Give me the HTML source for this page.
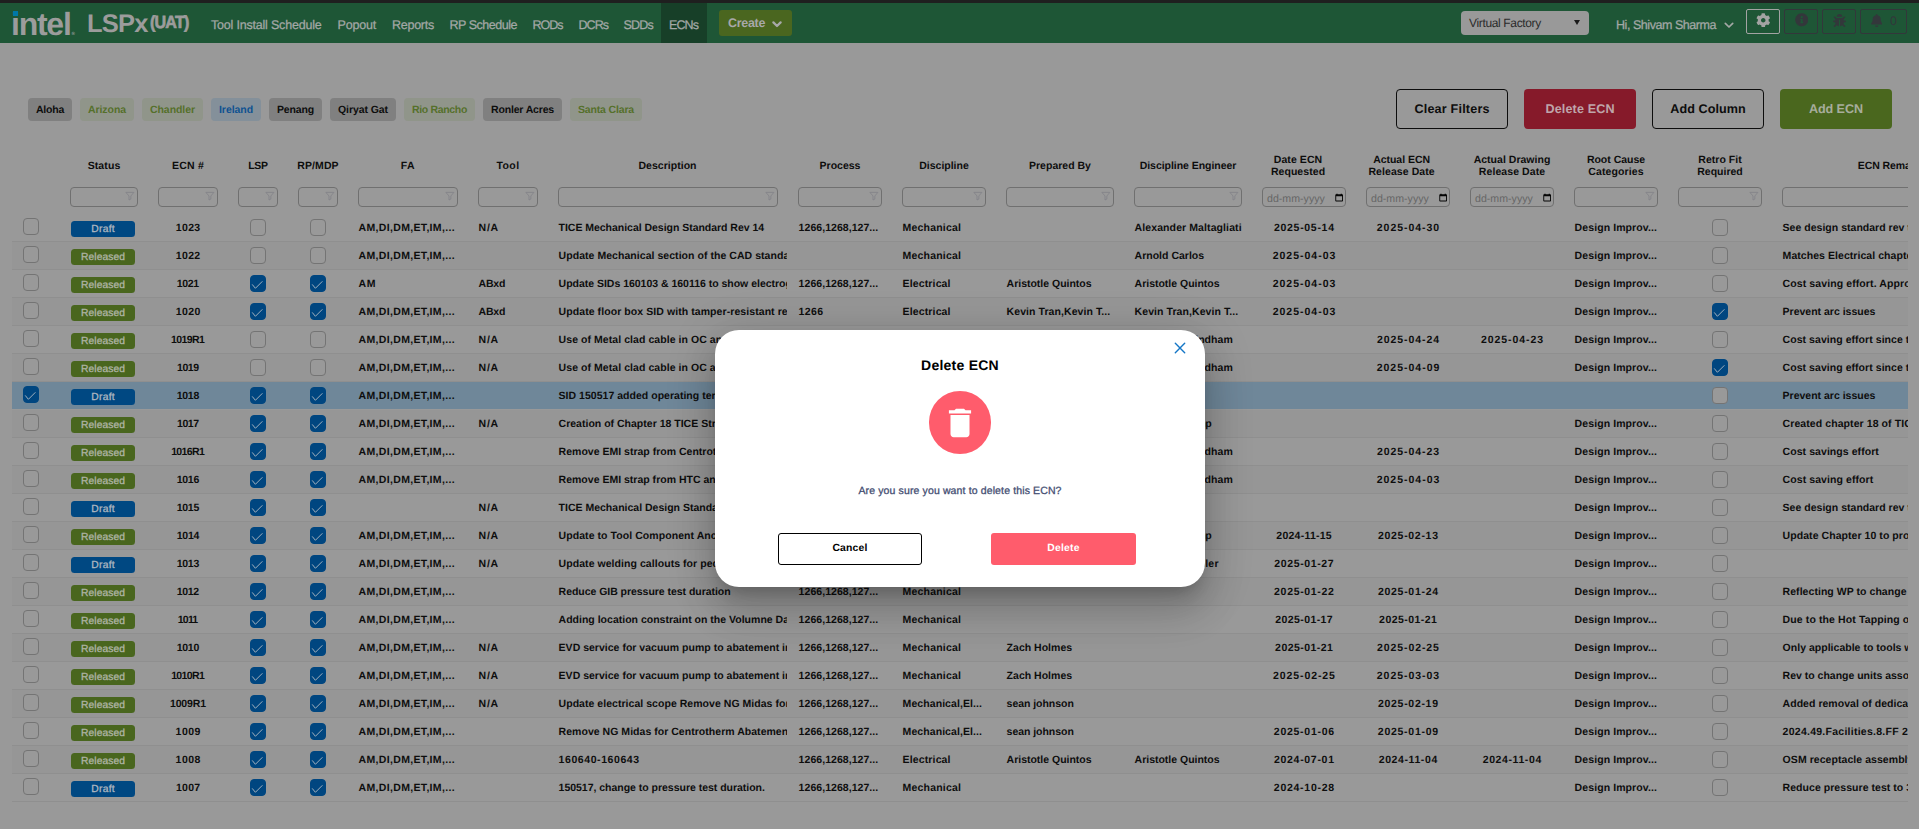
<!DOCTYPE html>
<html lang="en">
<head>
<meta charset="utf-8">
<title>LSPx (UAT) - ECNs</title>
<style>
*{box-sizing:border-box;margin:0;padding:0}
html,body{width:1919px;height:829px;overflow:hidden}
body{position:relative;background:#999;font-family:"Liberation Sans",sans-serif;color:#000;text-rendering:geometricPrecision}
.topstrip{position:absolute;left:0;top:0;width:1919px;height:3px;background:#1f1f1f}
.hdr{position:absolute;left:0;top:3px;width:1919px;height:40px;background:#1e5636}
.hdr>*{position:absolute}
.logo{left:13px;top:6px;height:28px;width:64px}
.logo .dot{position:absolute;left:0;top:2px;width:5px;height:5px;background:#0078a7;z-index:2}
.logo .intel{position:absolute;left:-2px;top:-3.5px;font-size:32px;line-height:36px;letter-spacing:-1.25px;color:#9c9c9c;font-weight:700}
.logo .reg{position:absolute;left:58.6px;top:20.6px;font-size:4.6px;line-height:8px;font-weight:700;color:#9c9c9c}
.brand{left:87px;top:6px;font-size:25.5px;line-height:30px;color:#9c9c9c;letter-spacing:-0.75px;font-weight:700}
.uat{left:149.5px;top:8.5px;font-size:17.5px;line-height:20px;font-weight:700;color:#9c9c9c;letter-spacing:-0.9px;transform:scaleX(0.92);transform-origin:0 0;-webkit-text-stroke:0.7px #9c9c9c}
nav{left:0;top:0;height:40px;width:720px}
.navactive{position:absolute;left:661px;top:0;width:46px;height:40px;background:#173f28}
.nav{position:absolute;top:14px;font-size:12.5px;line-height:16px;color:#a4a8a6;white-space:nowrap;-webkit-text-stroke:0.25px #a4a8a6}
.create{left:719px;top:7px;width:73px;height:26px;border-radius:3px;background:#4a661f;color:#a8a8a8;font-size:12.5px;font-weight:700;line-height:26px}
.create span{position:absolute;left:9px;top:0;letter-spacing:-0.3px}
.create svg{position:absolute;left:52.5px;top:10.5px}
.vf{left:1461px;top:8px;width:128px;height:24px;border-radius:4px;background:#999;font-size:12px;line-height:24px;color:#2b2b2b}
.vf span{position:absolute;left:8px;top:0;letter-spacing:-0.35px}
.vf i{position:absolute;left:113px;top:9px;width:0;height:0;border-left:3.5px solid transparent;border-right:3.5px solid transparent;border-top:5px solid #1a1a1a}
.user{left:1616px;top:14px;font-size:12.5px;line-height:16px;color:#a5b3ab;white-space:nowrap;width:130px;height:16px}
.user span{position:absolute;left:0;top:0;letter-spacing:-0.45px;-webkit-text-stroke:0.25px #a4a8a6;color:#a4a8a6}
.user svg{position:absolute;left:108px;top:5.2px}
.ib{top:6px;height:25px;border:1px solid #33373b;border-radius:2px}
.ib svg{position:absolute}
.ib1{left:1746px;width:34px;border-color:#a3a3a3}
.ib1 svg{left:8.8px;top:2.8px}
.ib2{left:1784px;width:34px}
.ib2 svg{left:9.8px;top:3.3px}
.ib3{left:1822px;width:34px}
.ib3 svg{left:10.1px;top:3.6px}
.ib4{left:1860px;width:47px}
.ib4 svg{left:10px;top:3.6px}
.ib4 span{position:absolute;left:29px;top:3px;font-size:12.5px;line-height:16px;color:#33373b}

.chip{position:absolute;top:98px;height:23px;border-radius:4px;font-size:10.5px;font-weight:700;line-height:25.4px;text-align:left;padding-left:8px;white-space:nowrap;overflow:hidden}
.kg{background:#808080;color:#0d0d0d}
.ko{background:#90958a;color:#55702a}

.kb{background:#84909a;color:#0f5291}

.abtn{position:absolute;top:89px;width:112px;height:40px;border-radius:4px;font-size:12.6px;font-weight:700;line-height:38.6px;text-align:center;white-space:nowrap}
.bo{border:1px solid #0d0d0d;color:#0d0d0d;background:#999}
.br{background:#861a2a;color:#bfa5aa;line-height:40.6px}
.bg{background:#4a671e;color:#a7ad9c;line-height:40.6px}

.grid{position:absolute;left:12px;top:146px;width:1896px;height:660px;overflow:hidden;font-size:10.5px;font-weight:700;color:#0d0d0d}
.thead{position:absolute;left:0;top:0;width:1896px;height:40px}
.th{position:absolute;top:0;height:40px;line-height:40px;text-align:center;white-space:nowrap}
.th span{display:block}
.th.two{line-height:12px;padding-top:8.4px}
.frow{position:absolute;left:0;top:41px;width:1896px;height:20px}
.fi{position:absolute;top:0;height:20px;border:1px solid #707070;border-radius:4px;background:#999}
.fi .fn{position:absolute;right:2.5px;top:3px}
.fi.date span{position:absolute;left:4px;top:1.5px;line-height:19px;font-size:10.6px;font-weight:400;color:#666;letter-spacing:0.02px}
.fi.date .cal{position:absolute;right:2px;top:5px}
.tr{position:absolute;left:0;width:1896px;height:28px;border-bottom:1px solid #8f8f8f}
.tr.alt{background:#969696}
.tr.sel{background:#6f8799;border-bottom-color:#999;background-clip:padding-box}
.td{position:absolute;top:0;height:27px;line-height:28.7px;white-space:nowrap;overflow:hidden;padding:0 10px}
.td.l{padding-left:10.6px;padding-right:0}
.td.c{text-align:center}
.td.l{text-align:left}
.cb{display:inline-block;width:16px;height:16.5px;border:1px solid #747474;border-radius:4px;background:#999;vertical-align:top;margin-top:5.2px;position:relative}
.cb.rowcb{margin-top:4.2px}
.cb.on{background:#004680;border-color:#004680;height:17px;margin-top:5px}
.cb.on.rowcb{margin-top:4px}
.cb.on svg{position:absolute;left:-1px;top:-1px}
.cb.dim{background:#999}
.bdg{display:inline-block;width:64px;height:16px;border-radius:3.5px;font-size:10.3px;font-weight:400;line-height:17.8px;text-align:center;vertical-align:top;margin-top:7px;margin-left:-2px;overflow:hidden}
.bdg.dr{background:#004882;color:#aeb7c0;-webkit-text-stroke:0.3px #aeb7c0}
.bdg.rl{background:#49661e;color:#b0b5a6;-webkit-text-stroke:0.3px #b0b5a6}

.modal{position:absolute;left:715px;top:330px;width:490px;height:257px;border-radius:24px;background:#fff;box-shadow:0 11px 15px -7px rgba(0,0,0,0.2),0 24px 38px 3px rgba(0,0,0,0.14),0 9px 46px 8px rgba(0,0,0,0.12)}
.modal>*{position:absolute}
.close{left:458.8px;top:11.6px}
.mtitle{left:0;top:25px;width:490px;text-align:center;font-size:14px;font-weight:700;line-height:20px;letter-spacing:0.25px;color:#000}
.circ{left:213.8px;top:61px;width:62.4px;height:62.6px;border-radius:50%;background:#ff5c6c}
.circ svg{position:absolute;left:12.2px;top:12.9px}
.mmsg{left:0;top:152.6px;width:490px;text-align:center;font-size:10.5px;line-height:16px;letter-spacing:0.13px;color:#444e72;-webkit-text-stroke:0.3px #444e72}
.mbtn{top:203px;height:32px;border-radius:3px;font-size:10.4px;font-weight:700;line-height:30px;text-align:center;letter-spacing:0.18px}
.cancel{left:63px;width:144px;border:1px solid #000;color:#000;background:#fff}
.delete{left:276px;width:145px;background:#ff5c6c;color:#fff;line-height:32px}
</style>
</head>
<body>
<div class="topstrip"></div>
<header class="hdr">
<div class="logo"><span class="dot"></span><span class="intel">intel</span><span class="reg">&reg;</span></div>
<div class="brand">LSPx</div><div class="uat">(UAT)</div>
<nav>
<div class="navactive"></div>
<a class="nav" style="left:211.0px;letter-spacing:-0.198px">Tool Install Schedule</a>
<a class="nav" style="left:337.5px;letter-spacing:-0.186px">Popout</a>
<a class="nav" style="left:392.0px;letter-spacing:-0.253px">Reports</a>
<a class="nav" style="left:449.5px;letter-spacing:-0.476px">RP Schedule</a>
<a class="nav" style="left:532.5px;letter-spacing:-1.007px">RODs</a>
<a class="nav" style="left:578.5px;letter-spacing:-0.958px">DCRs</a>
<a class="nav" style="left:623.5px;letter-spacing:-0.785px">SDDs</a>
<a class="nav" style="left:669.0px;letter-spacing:-0.910px">ECNs</a>
</nav>
<div class="create"><span>Create</span><svg width="10" height="7" viewBox="0 0 10 7"><path d="M1.4 1.4 5 5 8.600 1.400" fill="none" stroke="#a8a8a8" stroke-width="2.2" stroke-linecap="round" stroke-linejoin="round"/></svg></div>
<div class="vf"><span>Virtual Factory</span><i></i></div>
<div class="user"><span>Hi, Shivam Sharma</span><svg width="10" height="7" viewBox="0 0 10 7"><path d="M1.300 1.300 5 5 8.700 1.300" fill="none" stroke="#a4a8a6" stroke-width="1.700" stroke-linecap="round" stroke-linejoin="round"/></svg></div>
<div class="ib ib1"><svg width="14.5" height="14.5" viewBox="0 0 512 512"><path fill="#a3a3a3" d="M487.4 315.7l-42.600-24.600c4.300-23.200 4.300-47 0-70.200l42.600-24.600c4.900-2.800 7.100-8.600 5.500-14-11.100-35.600-30-67.800-54.700-94.600-3.800-4.100-10-5.100-14.800-2.300L380.800 110c-17.900-15.400-38.500-27.300-60.800-35.100V25.800c0-5.600-3.900-10.500-9.400-11.700-36.700-8.200-74.300-7.800-109.200 0-5.500 1.200-9.400 6.100-9.400 11.700V75c-22.200 7.900-42.800 19.800-60.800 35.100L88.700 85.500c-4.900-2.800-11-1.900-14.800 2.300-24.700 26.700-43.600 58.900-54.700 94.600-1.700 5.400.6 11.200 5.500 14L67.300 221c-4.300 23.200-4.300 47 0 70.200l-42.600 24.600c-4.900 2.800-7.100 8.600-5.500 14 11.100 35.600 30 67.800 54.700 94.600 3.800 4.100 10 5.100 14.800 2.300l42.600-24.600c17.900 15.400 38.500 27.300 60.800 35.100v49.200c0 5.600 3.900 10.500 9.400 11.700 36.700 8.200 74.300 7.800 109.200 0 5.500-1.200 9.400-6.100 9.400-11.700v-49.200c22.200-7.900 42.800-19.800 60.800-35.100l42.600 24.600c4.900 2.800 11 1.900 14.800-2.300 24.700-26.700 43.600-58.900 54.700-94.600 1.500-5.500-.7-11.300-5.600-14.100zM256 336c-44.100 0-80-35.900-80-80s35.900-80 80-80 80 35.900 80 80-35.900 80-80 80z"/></svg></div>
<div class="ib ib2 dk"><svg width="13.5" height="13.5" viewBox="0 0 512 512"><path fill="#33373b" d="M256 8C119.043 8 8 119.083 8 256c0 136.997 111.043 248 248 248s248-111.003 248-248C504 119.083 392.957 8 256 8zm0 110c23.196 0 42 18.804 42 42s-18.804 42-42 42-42-18.804-42-42 18.804-42 42-42zm56 254c0 6.627-5.373 12-12 12h-88c-6.627 0-12-5.373-12-12v-24c0-6.627 5.373-12 12-12h12v-64h-12c-6.627 0-12-5.373-12-12v-24c0-6.627 5.373-12 12-12h64c6.627 0 12 5.373 12 12v100h12c6.627 0 12 5.373 12 12v24z"/></svg></div>
<div class="ib ib3 dk"><svg width="13" height="13" viewBox="0 0 512 512"><path fill="#33373b" d="M511.988 288.900c-.478 17.430-15.217 31.100-32.653 31.100H424v16c0 21.864-4.882 42.584-13.600 61.145l60.228 60.228c12.496 12.497 12.496 32.758 0 45.255-12.498 12.497-32.759 12.496-45.256 0l-54.736-54.736C345.886 467.965 314.351 480 280 480V236c0-6.627-5.373-12-12-12h-24c-6.627 0-12 5.373-12 12v244c-34.351 0-65.886-12.035-90.636-32.108l-54.736 54.736c-12.498 12.497-32.759 12.496-45.256 0-12.496-12.497-12.496-32.758 0-45.255l60.228-60.228C92.882 378.584 88 357.864 88 336v-16H32.666C15.230 320 .491 306.330.013 288.900-.484 270.816 14.028 256 32 256h56v-58.745l-46.628-46.628c-12.496-12.497-12.496-32.758 0-45.255 12.498-12.497 32.758-12.497 45.256 0L141.255 160h229.489l54.627-54.627c12.498-12.497 32.758-12.497 45.256 0 12.496 12.497 12.496 32.758 0 45.255L424 197.255V256h56c17.972 0 32.484 14.816 31.988 32.900zM257 0c-61.856 0-112 50.144-112 112h224C369 50.144 318.856 0 257 0z"/></svg></div>
<div class="ib ib4 dk"><svg width="11.4" height="13" viewBox="0 0 448 512"><path fill="#33373b" d="M224 512c35.320 0 63.970-28.650 63.970-64H160.030c0 35.350 28.650 64 63.970 64zm215.390-149.710c-19.320-20.760-55.470-51.990-55.470-154.290 0-77.700-54.480-139.900-127.940-155.160V32c0-17.670-14.320-32-31.980-32s-31.980 14.330-31.980 32v20.840C118.560 68.100 64.080 130.300 64.080 208c0 102.300-36.150 133.530-55.470 154.290-6 6.450-8.660 14.160-8.610 21.710.11 16.400 12.980 32 32.100 32h383.800c19.120 0 32-15.600 32.100-32 .05-7.550-2.610-15.270-8.610-21.710z"/></svg><span>0</span></div>
</header>
<div class="chip kg" style="left:28px;width:44px;letter-spacing:-0.233px">Aloha</div>
<div class="chip ko" style="left:80px;width:54px;letter-spacing:-0.072px">Arizona</div>
<div class="chip ko" style="left:142px;width:61px;letter-spacing:-0.063px">Chandler</div>
<div class="chip kb" style="left:211px;width:50px;letter-spacing:-0.061px">Ireland</div>
<div class="chip kg" style="left:269px;width:53px;letter-spacing:-0.154px">Penang</div>
<div class="chip kg" style="left:330px;width:66px;letter-spacing:-0.077px">Qiryat Gat</div>
<div class="chip ko" style="left:404px;width:71px;letter-spacing:-0.333px">Rio Rancho</div>
<div class="chip kg" style="left:483px;width:79px;letter-spacing:-0.164px">Ronler Acres</div>
<div class="chip ko" style="left:570px;width:72px;letter-spacing:-0.161px">Santa Clara</div>
<div class="abtn bo" style="left:1396px;letter-spacing:0.197px;text-indent:0.197px">Clear Filters</div>
<div class="abtn br" style="left:1524px;letter-spacing:0.142px;text-indent:0.142px">Delete ECN</div>
<div class="abtn bo" style="left:1652px;letter-spacing:0.079px;text-indent:0.079px">Add Column</div>
<div class="abtn bg" style="left:1780px;letter-spacing:-0.066px;text-indent:-0.066px">Add ECN</div>
<div class="grid">
<div class="thead">
<div class="th" style="left:48.0px;width:88px"><span style="letter-spacing:0.102px;text-indent:0">Status</span></div>
<div class="th" style="left:136.0px;width:80px"><span style="letter-spacing:0.233px;text-indent:0">ECN #</span></div>
<div class="th" style="left:216.0px;width:60px"><span style="letter-spacing:-0.346px;text-indent:0">LSP</span></div>
<div class="th" style="left:276.0px;width:60px"><span style="letter-spacing:0.088px;text-indent:0">RP/MDP</span></div>
<div class="th" style="left:336.0px;width:120px"><span style="letter-spacing:0.420px;text-indent:0">FA</span></div>
<div class="th" style="left:456.0px;width:80px"><span style="letter-spacing:0.419px;text-indent:0">Tool</span></div>
<div class="th" style="left:536.0px;width:239px"><span style="letter-spacing:0.034px;text-indent:0">Description</span></div>
<div class="th" style="left:776.0px;width:104px"><span style="letter-spacing:-0.002px;text-indent:0">Process</span></div>
<div class="th" style="left:880.0px;width:104px"><span style="letter-spacing:-0.008px;text-indent:0">Discipline</span></div>
<div class="th" style="left:984.0px;width:128px"><span style="letter-spacing:0.007px;text-indent:0">Prepared By</span></div>
<div class="th" style="left:1112.0px;width:128px"><span style="letter-spacing:-0.045px;text-indent:0">Discipline Engineer</span></div>
<div class="th two" style="left:1234.0px;width:104px"><span style="letter-spacing:0.084px;text-indent:0">Date ECN</span><span style="letter-spacing:0.062px;text-indent:0">Requested</span></div>
<div class="th two" style="left:1337.6px;width:104px"><span style="letter-spacing:-0.027px;text-indent:0">Actual ECN</span><span style="letter-spacing:0.087px;text-indent:0">Release Date</span></div>
<div class="th two" style="left:1448.0px;width:104px"><span style="letter-spacing:0.022px;text-indent:0">Actual Drawing</span><span style="letter-spacing:0.087px;text-indent:0">Release Date</span></div>
<div class="th two" style="left:1552.0px;width:104px"><span style="letter-spacing:-0.018px;text-indent:0">Root Cause</span><span style="letter-spacing:0.114px;text-indent:0">Categories</span></div>
<div class="th two" style="left:1656.0px;width:104px"><span style="letter-spacing:0.022px;text-indent:0">Retro Fit</span><span style="letter-spacing:-0.008px;text-indent:0">Required</span></div>
<div class="th" style="left:1812.0px;width:136px"><span style="letter-spacing:-0.096px;text-indent:0">ECN Remarks</span></div>
</div>
<div class="frow">
<div class="fi" style="left:58px;width:68px"><svg class="fn" viewBox="0 0 10 10" width="10" height="10"><path d="M0.900 1.400h8l-3.100 3.600v3.100l-1.800.9v-4z" fill="none" stroke="#828288" stroke-width="0.8" stroke-linejoin="round"/></svg></div>
<div class="fi" style="left:146px;width:60px"><svg class="fn" viewBox="0 0 10 10" width="10" height="10"><path d="M0.900 1.400h8l-3.100 3.600v3.100l-1.800.9v-4z" fill="none" stroke="#828288" stroke-width="0.8" stroke-linejoin="round"/></svg></div>
<div class="fi" style="left:226px;width:40px"><svg class="fn" viewBox="0 0 10 10" width="10" height="10"><path d="M0.900 1.400h8l-3.100 3.600v3.100l-1.800.9v-4z" fill="none" stroke="#828288" stroke-width="0.8" stroke-linejoin="round"/></svg></div>
<div class="fi" style="left:286px;width:40px"><svg class="fn" viewBox="0 0 10 10" width="10" height="10"><path d="M0.900 1.400h8l-3.100 3.600v3.100l-1.800.9v-4z" fill="none" stroke="#828288" stroke-width="0.8" stroke-linejoin="round"/></svg></div>
<div class="fi" style="left:346px;width:100px"><svg class="fn" viewBox="0 0 10 10" width="10" height="10"><path d="M0.900 1.400h8l-3.100 3.600v3.100l-1.800.9v-4z" fill="none" stroke="#828288" stroke-width="0.8" stroke-linejoin="round"/></svg></div>
<div class="fi" style="left:466px;width:60px"><svg class="fn" viewBox="0 0 10 10" width="10" height="10"><path d="M0.900 1.400h8l-3.100 3.600v3.100l-1.800.9v-4z" fill="none" stroke="#828288" stroke-width="0.8" stroke-linejoin="round"/></svg></div>
<div class="fi" style="left:546px;width:220px"><svg class="fn" viewBox="0 0 10 10" width="10" height="10"><path d="M0.900 1.400h8l-3.100 3.600v3.100l-1.800.9v-4z" fill="none" stroke="#828288" stroke-width="0.8" stroke-linejoin="round"/></svg></div>
<div class="fi" style="left:786px;width:84px"><svg class="fn" viewBox="0 0 10 10" width="10" height="10"><path d="M0.900 1.400h8l-3.100 3.600v3.100l-1.800.9v-4z" fill="none" stroke="#828288" stroke-width="0.8" stroke-linejoin="round"/></svg></div>
<div class="fi" style="left:890px;width:84px"><svg class="fn" viewBox="0 0 10 10" width="10" height="10"><path d="M0.900 1.400h8l-3.100 3.600v3.100l-1.800.9v-4z" fill="none" stroke="#828288" stroke-width="0.8" stroke-linejoin="round"/></svg></div>
<div class="fi" style="left:994px;width:108px"><svg class="fn" viewBox="0 0 10 10" width="10" height="10"><path d="M0.900 1.400h8l-3.100 3.600v3.100l-1.800.9v-4z" fill="none" stroke="#828288" stroke-width="0.8" stroke-linejoin="round"/></svg></div>
<div class="fi" style="left:1122px;width:108px"><svg class="fn" viewBox="0 0 10 10" width="10" height="10"><path d="M0.900 1.400h8l-3.100 3.600v3.100l-1.800.9v-4z" fill="none" stroke="#828288" stroke-width="0.8" stroke-linejoin="round"/></svg></div>
<div class="fi date" style="left:1250px;width:84px"><span>dd-mm-yyyy</span><svg class="cal" viewBox="0 0 9 10" width="8.3" height="9.2"><path d="M1.500 0.700h1.300v0.700h3.400v-0.700h1.300v0.700h0.300a0.900 0.900 0 0 1 0.900 0.900v6a0.900 0.900 0 0 1-0.900 0.900h-6.600a0.900 0.900 0 0 1-0.900-0.900v-6a0.900 0.900 0 0 1 0.900-0.900h0.300zM1.300 3.600v4.500h6.400v-4.500z" fill="#050505" fill-rule="evenodd"/></svg></div>
<div class="fi date" style="left:1354px;width:84px"><span>dd-mm-yyyy</span><svg class="cal" viewBox="0 0 9 10" width="8.3" height="9.2"><path d="M1.500 0.700h1.300v0.700h3.400v-0.700h1.300v0.700h0.300a0.900 0.900 0 0 1 0.900 0.900v6a0.900 0.900 0 0 1-0.900 0.900h-6.600a0.900 0.900 0 0 1-0.900-0.900v-6a0.900 0.900 0 0 1 0.900-0.900h0.300zM1.300 3.600v4.500h6.400v-4.500z" fill="#050505" fill-rule="evenodd"/></svg></div>
<div class="fi date" style="left:1458px;width:84px"><span>dd-mm-yyyy</span><svg class="cal" viewBox="0 0 9 10" width="8.3" height="9.2"><path d="M1.500 0.700h1.300v0.700h3.400v-0.700h1.300v0.700h0.300a0.900 0.900 0 0 1 0.900 0.900v6a0.900 0.900 0 0 1-0.900 0.900h-6.600a0.900 0.900 0 0 1-0.900-0.900v-6a0.900 0.900 0 0 1 0.900-0.900h0.300zM1.300 3.600v4.500h6.400v-4.500z" fill="#050505" fill-rule="evenodd"/></svg></div>
<div class="fi" style="left:1562px;width:84px"><svg class="fn" viewBox="0 0 10 10" width="10" height="10"><path d="M0.900 1.400h8l-3.100 3.600v3.100l-1.800.9v-4z" fill="none" stroke="#828288" stroke-width="0.8" stroke-linejoin="round"/></svg></div>
<div class="fi" style="left:1666px;width:84px"><svg class="fn" viewBox="0 0 10 10" width="10" height="10"><path d="M0.900 1.400h8l-3.100 3.600v3.100l-1.800.9v-4z" fill="none" stroke="#828288" stroke-width="0.8" stroke-linejoin="round"/></svg></div>
<div class="fi" style="left:1770px;width:200px"></div>
</div>
<div class="tr" style="top:68px">
<div class="td c" style="left:0;width:38px"><span class="cb rowcb"></span></div>
<div class="td c" style="left:48px;width:88px"><span class="bdg dr" style="letter-spacing:0.256px;text-indent:0.256px">Draft</span></div>
<div class="td c" style="left:136px;width:80px;letter-spacing:0.347px;text-indent:0.347px">1023</div>
<div class="td c" style="left:216px;width:60px"><span class="cb "></span></div>
<div class="td c" style="left:276px;width:60px"><span class="cb "></span></div>
<div class="td l" style="left:336px;width:120px;letter-spacing:0.329px">AM,DI,DM,ET,IM,...</div>
<div class="td l" style="left:456px;width:80px;letter-spacing:0.709px">N/A</div>
<div class="td l" style="left:536px;width:239px;letter-spacing:-0.029px">TICE Mechanical Design Standard Rev 14</div>
<div class="td l" style="left:776px;width:104px;letter-spacing:0.052px">1266,1268,127...</div>
<div class="td l" style="left:880px;width:104px;letter-spacing:0.188px">Mechanical</div>
<div class="td l" style="left:1112px;width:128px;letter-spacing:0.098px">Alexander Maltagliati</div>
<div class="td c" style="left:1240px;width:104px;letter-spacing:0.699px;text-indent:0.699px">2025-05-14</div>
<div class="td c" style="left:1344px;width:104px;letter-spacing:0.966px;text-indent:0.966px">2025-04-30</div>
<div class="td l" style="left:1552px;width:104px;letter-spacing:0.093px">Design Improv...</div>
<div class="td c" style="left:1656px;width:104px"><span class="cb "></span></div>
<div class="td l" style="left:1760px;width:136px;letter-spacing:0.019px">See design standard rev to</div>
</div>
<div class="tr alt" style="top:96px">
<div class="td c" style="left:0;width:38px"><span class="cb rowcb"></span></div>
<div class="td c" style="left:48px;width:88px"><span class="bdg rl" style="letter-spacing:0.085px;text-indent:0.085px">Released</span></div>
<div class="td c" style="left:136px;width:80px;letter-spacing:0.322px;text-indent:0.322px">1022</div>
<div class="td c" style="left:216px;width:60px"><span class="cb "></span></div>
<div class="td c" style="left:276px;width:60px"><span class="cb "></span></div>
<div class="td l" style="left:336px;width:120px;letter-spacing:0.329px">AM,DI,DM,ET,IM,...</div>
<div class="td l" style="left:536px;width:239px;letter-spacing:0.046px">Update Mechanical section of the CAD standard</div>
<div class="td l" style="left:880px;width:104px;letter-spacing:0.188px">Mechanical</div>
<div class="td l" style="left:1112px;width:128px;letter-spacing:0.006px">Arnold Carlos</div>
<div class="td c" style="left:1240px;width:104px;letter-spacing:0.999px;text-indent:0.999px">2025-04-03</div>
<div class="td l" style="left:1552px;width:104px;letter-spacing:0.093px">Design Improv...</div>
<div class="td c" style="left:1656px;width:104px"><span class="cb "></span></div>
<div class="td l" style="left:1760px;width:136px;letter-spacing:0.054px">Matches Electrical chapter</div>
</div>
<div class="tr" style="top:124px">
<div class="td c" style="left:0;width:38px"><span class="cb rowcb"></span></div>
<div class="td c" style="left:48px;width:88px"><span class="bdg rl" style="letter-spacing:0.085px;text-indent:0.085px">Released</span></div>
<div class="td c" style="left:136px;width:80px;letter-spacing:-0.340px;text-indent:-0.340px">1021</div>
<div class="td c" style="left:216px;width:60px"><span class="cb on "><svg viewBox="0 0 16 17" width="16" height="17"><path d="M2.2 9.4 5.4 13.300 12.400 6.300" fill="none" stroke="#a0afbd" stroke-width="1"/></svg></span></div>
<div class="td c" style="left:276px;width:60px"><span class="cb on "><svg viewBox="0 0 16 17" width="16" height="17"><path d="M2.2 9.4 5.4 13.300 12.400 6.300" fill="none" stroke="#a0afbd" stroke-width="1"/></svg></span></div>
<div class="td l" style="left:336px;width:120px;letter-spacing:0.571px">AM</div>
<div class="td l" style="left:456px;width:80px;letter-spacing:-0.240px">ABxd</div>
<div class="td l" style="left:536px;width:239px;letter-spacing:-0.017px">Update SIDs 160103 &amp; 160116 to show electrogrip</div>
<div class="td l" style="left:776px;width:104px;letter-spacing:0.052px">1266,1268,127...</div>
<div class="td l" style="left:880px;width:104px;letter-spacing:0.134px">Electrical</div>
<div class="td l" style="left:984px;width:128px;letter-spacing:-0.011px">Aristotle Quintos</div>
<div class="td l" style="left:1112px;width:128px;letter-spacing:-0.011px">Aristotle Quintos</div>
<div class="td c" style="left:1240px;width:104px;letter-spacing:0.999px;text-indent:0.999px">2025-04-03</div>
<div class="td l" style="left:1552px;width:104px;letter-spacing:0.093px">Design Improv...</div>
<div class="td c" style="left:1656px;width:104px"><span class="cb "></span></div>
<div class="td l" style="left:1760px;width:136px;letter-spacing:0.100px">Cost saving effort. Approved</div>
</div>
<div class="tr alt" style="top:152px">
<div class="td c" style="left:0;width:38px"><span class="cb rowcb"></span></div>
<div class="td c" style="left:48px;width:88px"><span class="bdg rl" style="letter-spacing:0.085px;text-indent:0.085px">Released</span></div>
<div class="td c" style="left:136px;width:80px;letter-spacing:0.422px;text-indent:0.422px">1020</div>
<div class="td c" style="left:216px;width:60px"><span class="cb on "><svg viewBox="0 0 16 17" width="16" height="17"><path d="M2.2 9.4 5.4 13.300 12.400 6.300" fill="none" stroke="#a0afbd" stroke-width="1"/></svg></span></div>
<div class="td c" style="left:276px;width:60px"><span class="cb on "><svg viewBox="0 0 16 17" width="16" height="17"><path d="M2.2 9.4 5.4 13.300 12.400 6.300" fill="none" stroke="#a0afbd" stroke-width="1"/></svg></span></div>
<div class="td l" style="left:336px;width:120px;letter-spacing:0.329px">AM,DI,DM,ET,IM,...</div>
<div class="td l" style="left:456px;width:80px;letter-spacing:-0.240px">ABxd</div>
<div class="td l" style="left:536px;width:239px;letter-spacing:0.075px">Update floor box SID with tamper-resistant rec</div>
<div class="td l" style="left:776px;width:104px;letter-spacing:0.380px">1266</div>
<div class="td l" style="left:880px;width:104px;letter-spacing:0.134px">Electrical</div>
<div class="td l" style="left:984px;width:128px;letter-spacing:0.074px">Kevin Tran,Kevin T...</div>
<div class="td l" style="left:1112px;width:128px;letter-spacing:0.074px">Kevin Tran,Kevin T...</div>
<div class="td c" style="left:1240px;width:104px;letter-spacing:0.999px;text-indent:0.999px">2025-04-03</div>
<div class="td l" style="left:1552px;width:104px;letter-spacing:0.093px">Design Improv...</div>
<div class="td c" style="left:1656px;width:104px"><span class="cb on "><svg viewBox="0 0 16 17" width="16" height="17"><path d="M2.2 9.4 5.4 13.300 12.400 6.300" fill="none" stroke="#a0afbd" stroke-width="1"/></svg></span></div>
<div class="td l" style="left:1760px;width:136px;letter-spacing:-0.001px">Prevent arc issues</div>
</div>
<div class="tr" style="top:180px">
<div class="td c" style="left:0;width:38px"><span class="cb rowcb"></span></div>
<div class="td c" style="left:48px;width:88px"><span class="bdg rl" style="letter-spacing:0.085px;text-indent:0.085px">Released</span></div>
<div class="td c" style="left:136px;width:80px;letter-spacing:-0.576px;text-indent:-0.576px">1019R1</div>
<div class="td c" style="left:216px;width:60px"><span class="cb "></span></div>
<div class="td c" style="left:276px;width:60px"><span class="cb "></span></div>
<div class="td l" style="left:336px;width:120px;letter-spacing:0.329px">AM,DI,DM,ET,IM,...</div>
<div class="td l" style="left:456px;width:80px;letter-spacing:0.709px">N/A</div>
<div class="td l" style="left:536px;width:239px;letter-spacing:0.063px">Use of Metal clad cable in OC and HTC areas</div>
<div class="td l" style="left:776px;width:104px;letter-spacing:0.052px">1266,1268,127...</div>
<div class="td l" style="left:880px;width:104px;letter-spacing:0.134px">Electrical</div>
<div class="td l" style="left:984px;width:128px;letter-spacing:0.054px">Nathaniel Windham</div>
<div class="td l" style="left:1112px;width:128px;letter-spacing:0.054px">Nathaniel Windham</div>
<div class="td c" style="left:1344px;width:104px;letter-spacing:0.921px;text-indent:0.921px">2025-04-24</div>
<div class="td c" style="left:1448px;width:104px;letter-spacing:0.921px;text-indent:0.921px">2025-04-23</div>
<div class="td l" style="left:1552px;width:104px;letter-spacing:0.093px">Design Improv...</div>
<div class="td c" style="left:1656px;width:104px"><span class="cb "></span></div>
<div class="td l" style="left:1760px;width:136px;letter-spacing:0.051px">Cost saving effort since the</div>
</div>
<div class="tr alt" style="top:208px">
<div class="td c" style="left:0;width:38px"><span class="cb rowcb"></span></div>
<div class="td c" style="left:48px;width:88px"><span class="bdg rl" style="letter-spacing:0.085px;text-indent:0.085px">Released</span></div>
<div class="td c" style="left:136px;width:80px;letter-spacing:-0.453px;text-indent:-0.453px">1019</div>
<div class="td c" style="left:216px;width:60px"><span class="cb "></span></div>
<div class="td c" style="left:276px;width:60px"><span class="cb "></span></div>
<div class="td l" style="left:336px;width:120px;letter-spacing:0.329px">AM,DI,DM,ET,IM,...</div>
<div class="td l" style="left:456px;width:80px;letter-spacing:0.709px">N/A</div>
<div class="td l" style="left:536px;width:239px;letter-spacing:0.063px">Use of Metal clad cable in OC and HTC areas</div>
<div class="td l" style="left:776px;width:104px;letter-spacing:0.052px">1266,1268,127...</div>
<div class="td l" style="left:880px;width:104px;letter-spacing:0.134px">Electrical</div>
<div class="td l" style="left:984px;width:128px;letter-spacing:0.054px">Nathaniel Windham</div>
<div class="td l" style="left:1112px;width:128px;letter-spacing:0.054px">Nathaniel Windham</div>
<div class="td c" style="left:1344px;width:104px;letter-spacing:0.999px;text-indent:0.999px">2025-04-09</div>
<div class="td l" style="left:1552px;width:104px;letter-spacing:0.093px">Design Improv...</div>
<div class="td c" style="left:1656px;width:104px"><span class="cb on "><svg viewBox="0 0 16 17" width="16" height="17"><path d="M2.2 9.4 5.4 13.300 12.400 6.300" fill="none" stroke="#a0afbd" stroke-width="1"/></svg></span></div>
<div class="td l" style="left:1760px;width:136px;letter-spacing:0.051px">Cost saving effort since the</div>
</div>
<div class="tr sel" style="top:236px">
<div class="td c" style="left:0;width:38px"><span class="cb on rowcb"><svg viewBox="0 0 16 17" width="16" height="17"><path d="M2.2 9.4 5.4 13.300 12.400 6.300" fill="none" stroke="#a0afbd" stroke-width="1"/></svg></span></div>
<div class="td c" style="left:48px;width:88px"><span class="bdg dr" style="letter-spacing:0.256px;text-indent:0.256px">Draft</span></div>
<div class="td c" style="left:136px;width:80px;letter-spacing:-0.257px;text-indent:-0.257px">1018</div>
<div class="td c" style="left:216px;width:60px"><span class="cb on "><svg viewBox="0 0 16 17" width="16" height="17"><path d="M2.2 9.4 5.4 13.300 12.400 6.300" fill="none" stroke="#a0afbd" stroke-width="1"/></svg></span></div>
<div class="td c" style="left:276px;width:60px"><span class="cb on "><svg viewBox="0 0 16 17" width="16" height="17"><path d="M2.2 9.4 5.4 13.300 12.400 6.300" fill="none" stroke="#a0afbd" stroke-width="1"/></svg></span></div>
<div class="td l" style="left:336px;width:120px;letter-spacing:0.329px">AM,DI,DM,ET,IM,...</div>
<div class="td l" style="left:536px;width:239px;letter-spacing:0.023px">SID 150517 added operating temperature</div>
<div class="td l" style="left:776px;width:104px;letter-spacing:0.052px">1266,1268,127...</div>
<div class="td l" style="left:880px;width:104px;letter-spacing:0.188px">Mechanical</div>
<div class="td c" style="left:1656px;width:104px"><span class="cb dim"></span></div>
<div class="td l" style="left:1760px;width:136px;letter-spacing:-0.001px">Prevent arc issues</div>
</div>
<div class="tr alt" style="top:264px">
<div class="td c" style="left:0;width:38px"><span class="cb rowcb"></span></div>
<div class="td c" style="left:48px;width:88px"><span class="bdg rl" style="letter-spacing:0.085px;text-indent:0.085px">Released</span></div>
<div class="td c" style="left:136px;width:80px;letter-spacing:-0.473px;text-indent:-0.473px">1017</div>
<div class="td c" style="left:216px;width:60px"><span class="cb on "><svg viewBox="0 0 16 17" width="16" height="17"><path d="M2.2 9.4 5.4 13.300 12.400 6.300" fill="none" stroke="#a0afbd" stroke-width="1"/></svg></span></div>
<div class="td c" style="left:276px;width:60px"><span class="cb on "><svg viewBox="0 0 16 17" width="16" height="17"><path d="M2.2 9.4 5.4 13.300 12.400 6.300" fill="none" stroke="#a0afbd" stroke-width="1"/></svg></span></div>
<div class="td l" style="left:336px;width:120px;letter-spacing:0.329px">AM,DI,DM,ET,IM,...</div>
<div class="td l" style="left:456px;width:80px;letter-spacing:0.709px">N/A</div>
<div class="td l" style="left:536px;width:239px;letter-spacing:0.007px">Creation of Chapter 18 TICE Structural</div>
<div class="td l" style="left:776px;width:104px;letter-spacing:0.052px">1266,1268,127...</div>
<div class="td l" style="left:880px;width:104px;letter-spacing:0.188px">Mechanical</div>
<div class="td l" style="left:1112px;width:128px;letter-spacing:-0.187px">Benjamin Kemp</div>
<div class="td l" style="left:1552px;width:104px;letter-spacing:0.093px">Design Improv...</div>
<div class="td c" style="left:1656px;width:104px"><span class="cb "></span></div>
<div class="td l" style="left:1760px;width:136px;letter-spacing:0.080px">Created chapter 18 of TICE</div>
</div>
<div class="tr" style="top:292px">
<div class="td c" style="left:0;width:38px"><span class="cb rowcb"></span></div>
<div class="td c" style="left:48px;width:88px"><span class="bdg rl" style="letter-spacing:0.085px;text-indent:0.085px">Released</span></div>
<div class="td c" style="left:136px;width:80px;letter-spacing:-0.622px;text-indent:-0.622px">1016R1</div>
<div class="td c" style="left:216px;width:60px"><span class="cb on "><svg viewBox="0 0 16 17" width="16" height="17"><path d="M2.2 9.4 5.4 13.300 12.400 6.300" fill="none" stroke="#a0afbd" stroke-width="1"/></svg></span></div>
<div class="td c" style="left:276px;width:60px"><span class="cb on "><svg viewBox="0 0 16 17" width="16" height="17"><path d="M2.2 9.4 5.4 13.300 12.400 6.300" fill="none" stroke="#a0afbd" stroke-width="1"/></svg></span></div>
<div class="td l" style="left:336px;width:120px;letter-spacing:0.329px">AM,DI,DM,ET,IM,...</div>
<div class="td l" style="left:536px;width:239px;letter-spacing:0.008px">Remove EMI strap from Centrotherm</div>
<div class="td l" style="left:776px;width:104px;letter-spacing:0.052px">1266,1268,127...</div>
<div class="td l" style="left:880px;width:104px;letter-spacing:0.134px">Electrical</div>
<div class="td l" style="left:984px;width:128px;letter-spacing:0.054px">Nathaniel Windham</div>
<div class="td l" style="left:1112px;width:128px;letter-spacing:0.054px">Nathaniel Windham</div>
<div class="td c" style="left:1344px;width:104px;letter-spacing:0.921px;text-indent:0.921px">2025-04-23</div>
<div class="td l" style="left:1552px;width:104px;letter-spacing:0.093px">Design Improv...</div>
<div class="td c" style="left:1656px;width:104px"><span class="cb "></span></div>
<div class="td l" style="left:1760px;width:136px;letter-spacing:0.065px">Cost savings effort</div>
</div>
<div class="tr alt" style="top:320px">
<div class="td c" style="left:0;width:38px"><span class="cb rowcb"></span></div>
<div class="td c" style="left:48px;width:88px"><span class="bdg rl" style="letter-spacing:0.085px;text-indent:0.085px">Released</span></div>
<div class="td c" style="left:136px;width:80px;letter-spacing:-0.257px;text-indent:-0.257px">1016</div>
<div class="td c" style="left:216px;width:60px"><span class="cb on "><svg viewBox="0 0 16 17" width="16" height="17"><path d="M2.2 9.4 5.4 13.300 12.400 6.300" fill="none" stroke="#a0afbd" stroke-width="1"/></svg></span></div>
<div class="td c" style="left:276px;width:60px"><span class="cb on "><svg viewBox="0 0 16 17" width="16" height="17"><path d="M2.2 9.4 5.4 13.300 12.400 6.300" fill="none" stroke="#a0afbd" stroke-width="1"/></svg></span></div>
<div class="td l" style="left:336px;width:120px;letter-spacing:0.329px">AM,DI,DM,ET,IM,...</div>
<div class="td l" style="left:536px;width:239px;letter-spacing:0.005px">Remove EMI strap from HTC and</div>
<div class="td l" style="left:776px;width:104px;letter-spacing:0.052px">1266,1268,127...</div>
<div class="td l" style="left:880px;width:104px;letter-spacing:0.134px">Electrical</div>
<div class="td l" style="left:984px;width:128px;letter-spacing:0.054px">Nathaniel Windham</div>
<div class="td l" style="left:1112px;width:128px;letter-spacing:0.054px">Nathaniel Windham</div>
<div class="td c" style="left:1344px;width:104px;letter-spacing:0.999px;text-indent:0.999px">2025-04-03</div>
<div class="td l" style="left:1552px;width:104px;letter-spacing:0.093px">Design Improv...</div>
<div class="td c" style="left:1656px;width:104px"><span class="cb "></span></div>
<div class="td l" style="left:1760px;width:136px;letter-spacing:0.081px">Cost saving effort</div>
</div>
<div class="tr" style="top:348px">
<div class="td c" style="left:0;width:38px"><span class="cb rowcb"></span></div>
<div class="td c" style="left:48px;width:88px"><span class="bdg dr" style="letter-spacing:0.256px;text-indent:0.256px">Draft</span></div>
<div class="td c" style="left:136px;width:80px;letter-spacing:-0.307px;text-indent:-0.307px">1015</div>
<div class="td c" style="left:216px;width:60px"><span class="cb on "><svg viewBox="0 0 16 17" width="16" height="17"><path d="M2.2 9.4 5.4 13.300 12.400 6.300" fill="none" stroke="#a0afbd" stroke-width="1"/></svg></span></div>
<div class="td c" style="left:276px;width:60px"><span class="cb on "><svg viewBox="0 0 16 17" width="16" height="17"><path d="M2.2 9.4 5.4 13.300 12.400 6.300" fill="none" stroke="#a0afbd" stroke-width="1"/></svg></span></div>
<div class="td l" style="left:456px;width:80px;letter-spacing:0.709px">N/A</div>
<div class="td l" style="left:536px;width:239px;letter-spacing:0.002px">TICE Mechanical Design Standard</div>
<div class="td l" style="left:776px;width:104px;letter-spacing:0.052px">1266,1268,127...</div>
<div class="td l" style="left:880px;width:104px;letter-spacing:0.188px">Mechanical</div>
<div class="td l" style="left:1552px;width:104px;letter-spacing:0.093px">Design Improv...</div>
<div class="td c" style="left:1656px;width:104px"><span class="cb "></span></div>
<div class="td l" style="left:1760px;width:136px;letter-spacing:0.019px">See design standard rev to</div>
</div>
<div class="tr alt" style="top:376px">
<div class="td c" style="left:0;width:38px"><span class="cb rowcb"></span></div>
<div class="td c" style="left:48px;width:88px"><span class="bdg rl" style="letter-spacing:0.085px;text-indent:0.085px">Released</span></div>
<div class="td c" style="left:136px;width:80px;letter-spacing:-0.208px;text-indent:-0.208px">1014</div>
<div class="td c" style="left:216px;width:60px"><span class="cb on "><svg viewBox="0 0 16 17" width="16" height="17"><path d="M2.2 9.4 5.4 13.300 12.400 6.300" fill="none" stroke="#a0afbd" stroke-width="1"/></svg></span></div>
<div class="td c" style="left:276px;width:60px"><span class="cb on "><svg viewBox="0 0 16 17" width="16" height="17"><path d="M2.2 9.4 5.4 13.300 12.400 6.300" fill="none" stroke="#a0afbd" stroke-width="1"/></svg></span></div>
<div class="td l" style="left:336px;width:120px;letter-spacing:0.329px">AM,DI,DM,ET,IM,...</div>
<div class="td l" style="left:456px;width:80px;letter-spacing:0.709px">N/A</div>
<div class="td l" style="left:536px;width:239px;letter-spacing:0.064px">Update to Tool Component Anchorage</div>
<div class="td l" style="left:776px;width:104px;letter-spacing:0.052px">1266,1268,127...</div>
<div class="td l" style="left:880px;width:104px;letter-spacing:0.188px">Mechanical</div>
<div class="td l" style="left:1112px;width:128px;letter-spacing:-0.187px">Benjamin Kemp</div>
<div class="td c" style="left:1240px;width:104px;letter-spacing:0.252px;text-indent:0.252px">2024-11-15</div>
<div class="td c" style="left:1344px;width:104px;letter-spacing:0.695px;text-indent:0.695px">2025-02-13</div>
<div class="td l" style="left:1552px;width:104px;letter-spacing:0.093px">Design Improv...</div>
<div class="td c" style="left:1656px;width:104px"><span class="cb "></span></div>
<div class="td l" style="left:1760px;width:136px;letter-spacing:0.060px">Update Chapter 10 to provide</div>
</div>
<div class="tr" style="top:404px">
<div class="td c" style="left:0;width:38px"><span class="cb rowcb"></span></div>
<div class="td c" style="left:48px;width:88px"><span class="bdg dr" style="letter-spacing:0.256px;text-indent:0.256px">Draft</span></div>
<div class="td c" style="left:136px;width:80px;letter-spacing:-0.274px;text-indent:-0.274px">1013</div>
<div class="td c" style="left:216px;width:60px"><span class="cb on "><svg viewBox="0 0 16 17" width="16" height="17"><path d="M2.2 9.4 5.4 13.300 12.400 6.300" fill="none" stroke="#a0afbd" stroke-width="1"/></svg></span></div>
<div class="td c" style="left:276px;width:60px"><span class="cb on "><svg viewBox="0 0 16 17" width="16" height="17"><path d="M2.2 9.4 5.4 13.300 12.400 6.300" fill="none" stroke="#a0afbd" stroke-width="1"/></svg></span></div>
<div class="td l" style="left:336px;width:120px;letter-spacing:0.329px">AM,DI,DM,ET,IM,...</div>
<div class="td l" style="left:456px;width:80px;letter-spacing:0.709px">N/A</div>
<div class="td l" style="left:536px;width:239px;letter-spacing:0.057px">Update welding callouts for pedestals</div>
<div class="td l" style="left:776px;width:104px;letter-spacing:0.052px">1266,1268,127...</div>
<div class="td l" style="left:880px;width:104px;letter-spacing:0.188px">Mechanical</div>
<div class="td l" style="left:1112px;width:128px;letter-spacing:0.241px">Samantha Miller</div>
<div class="td c" style="left:1240px;width:104px;letter-spacing:0.621px;text-indent:0.621px">2025-01-27</div>
<div class="td l" style="left:1552px;width:104px;letter-spacing:0.093px">Design Improv...</div>
<div class="td c" style="left:1656px;width:104px"><span class="cb "></span></div>
</div>
<div class="tr alt" style="top:432px">
<div class="td c" style="left:0;width:38px"><span class="cb rowcb"></span></div>
<div class="td c" style="left:48px;width:88px"><span class="bdg rl" style="letter-spacing:0.085px;text-indent:0.085px">Released</span></div>
<div class="td c" style="left:136px;width:80px;letter-spacing:-0.340px;text-indent:-0.340px">1012</div>
<div class="td c" style="left:216px;width:60px"><span class="cb on "><svg viewBox="0 0 16 17" width="16" height="17"><path d="M2.2 9.4 5.4 13.300 12.400 6.300" fill="none" stroke="#a0afbd" stroke-width="1"/></svg></span></div>
<div class="td c" style="left:276px;width:60px"><span class="cb on "><svg viewBox="0 0 16 17" width="16" height="17"><path d="M2.2 9.4 5.4 13.300 12.400 6.300" fill="none" stroke="#a0afbd" stroke-width="1"/></svg></span></div>
<div class="td l" style="left:336px;width:120px;letter-spacing:0.329px">AM,DI,DM,ET,IM,...</div>
<div class="td l" style="left:536px;width:239px;letter-spacing:-0.040px">Reduce GIB pressure test duration</div>
<div class="td l" style="left:776px;width:104px;letter-spacing:0.052px">1266,1268,127...</div>
<div class="td l" style="left:880px;width:104px;letter-spacing:0.188px">Mechanical</div>
<div class="td c" style="left:1240px;width:104px;letter-spacing:0.673px;text-indent:0.673px">2025-01-22</div>
<div class="td c" style="left:1344px;width:104px;letter-spacing:0.717px;text-indent:0.717px">2025-01-24</div>
<div class="td l" style="left:1552px;width:104px;letter-spacing:0.093px">Design Improv...</div>
<div class="td c" style="left:1656px;width:104px"><span class="cb "></span></div>
<div class="td l" style="left:1760px;width:136px;letter-spacing:0.046px">Reflecting WP to change</div>
</div>
<div class="tr" style="top:460px">
<div class="td c" style="left:0;width:38px"><span class="cb rowcb"></span></div>
<div class="td c" style="left:48px;width:88px"><span class="bdg rl" style="letter-spacing:0.085px;text-indent:0.085px">Released</span></div>
<div class="td c" style="left:136px;width:80px;letter-spacing:-0.810px;text-indent:-0.810px">1011</div>
<div class="td c" style="left:216px;width:60px"><span class="cb on "><svg viewBox="0 0 16 17" width="16" height="17"><path d="M2.2 9.4 5.4 13.300 12.400 6.300" fill="none" stroke="#a0afbd" stroke-width="1"/></svg></span></div>
<div class="td c" style="left:276px;width:60px"><span class="cb on "><svg viewBox="0 0 16 17" width="16" height="17"><path d="M2.2 9.4 5.4 13.300 12.400 6.300" fill="none" stroke="#a0afbd" stroke-width="1"/></svg></span></div>
<div class="td l" style="left:336px;width:120px;letter-spacing:0.329px">AM,DI,DM,ET,IM,...</div>
<div class="td l" style="left:536px;width:239px;letter-spacing:0.004px">Adding location constraint on the Volumne Data</div>
<div class="td l" style="left:776px;width:104px;letter-spacing:0.052px">1266,1268,127...</div>
<div class="td l" style="left:880px;width:104px;letter-spacing:0.188px">Mechanical</div>
<div class="td c" style="left:1240px;width:104px;letter-spacing:0.408px;text-indent:0.408px">2025-01-17</div>
<div class="td c" style="left:1344px;width:104px;letter-spacing:0.452px;text-indent:0.452px">2025-01-21</div>
<div class="td l" style="left:1552px;width:104px;letter-spacing:0.093px">Design Improv...</div>
<div class="td c" style="left:1656px;width:104px"><span class="cb "></span></div>
<div class="td l" style="left:1760px;width:136px;letter-spacing:0.113px">Due to the Hot Tapping of</div>
</div>
<div class="tr alt" style="top:488px">
<div class="td c" style="left:0;width:38px"><span class="cb rowcb"></span></div>
<div class="td c" style="left:48px;width:88px"><span class="bdg rl" style="letter-spacing:0.085px;text-indent:0.085px">Released</span></div>
<div class="td c" style="left:136px;width:80px;letter-spacing:-0.241px;text-indent:-0.241px">1010</div>
<div class="td c" style="left:216px;width:60px"><span class="cb on "><svg viewBox="0 0 16 17" width="16" height="17"><path d="M2.2 9.4 5.4 13.300 12.400 6.300" fill="none" stroke="#a0afbd" stroke-width="1"/></svg></span></div>
<div class="td c" style="left:276px;width:60px"><span class="cb on "><svg viewBox="0 0 16 17" width="16" height="17"><path d="M2.2 9.4 5.4 13.300 12.400 6.300" fill="none" stroke="#a0afbd" stroke-width="1"/></svg></span></div>
<div class="td l" style="left:336px;width:120px;letter-spacing:0.329px">AM,DI,DM,ET,IM,...</div>
<div class="td l" style="left:456px;width:80px;letter-spacing:0.709px">N/A</div>
<div class="td l" style="left:536px;width:239px;letter-spacing:0.015px">EVD service for vacuum pump to abatement inlet</div>
<div class="td l" style="left:776px;width:104px;letter-spacing:0.052px">1266,1268,127...</div>
<div class="td l" style="left:880px;width:104px;letter-spacing:0.188px">Mechanical</div>
<div class="td l" style="left:984px;width:128px;letter-spacing:0.015px">Zach Holmes</div>
<div class="td c" style="left:1240px;width:104px;letter-spacing:0.452px;text-indent:0.452px">2025-01-21</div>
<div class="td c" style="left:1344px;width:104px;letter-spacing:0.905px;text-indent:0.905px">2025-02-25</div>
<div class="td l" style="left:1552px;width:104px;letter-spacing:0.093px">Design Improv...</div>
<div class="td c" style="left:1656px;width:104px"><span class="cb "></span></div>
<div class="td l" style="left:1760px;width:136px;letter-spacing:0.017px">Only applicable to tools with</div>
</div>
<div class="tr" style="top:516px">
<div class="td c" style="left:0;width:38px"><span class="cb rowcb"></span></div>
<div class="td c" style="left:48px;width:88px"><span class="bdg rl" style="letter-spacing:0.085px;text-indent:0.085px">Released</span></div>
<div class="td c" style="left:136px;width:80px;letter-spacing:-0.612px;text-indent:-0.612px">1010R1</div>
<div class="td c" style="left:216px;width:60px"><span class="cb on "><svg viewBox="0 0 16 17" width="16" height="17"><path d="M2.2 9.4 5.4 13.300 12.400 6.300" fill="none" stroke="#a0afbd" stroke-width="1"/></svg></span></div>
<div class="td c" style="left:276px;width:60px"><span class="cb on "><svg viewBox="0 0 16 17" width="16" height="17"><path d="M2.2 9.4 5.4 13.300 12.400 6.300" fill="none" stroke="#a0afbd" stroke-width="1"/></svg></span></div>
<div class="td l" style="left:336px;width:120px;letter-spacing:0.329px">AM,DI,DM,ET,IM,...</div>
<div class="td l" style="left:456px;width:80px;letter-spacing:0.709px">N/A</div>
<div class="td l" style="left:536px;width:239px;letter-spacing:0.015px">EVD service for vacuum pump to abatement inlet</div>
<div class="td l" style="left:776px;width:104px;letter-spacing:0.052px">1266,1268,127...</div>
<div class="td l" style="left:880px;width:104px;letter-spacing:0.188px">Mechanical</div>
<div class="td l" style="left:984px;width:128px;letter-spacing:0.015px">Zach Holmes</div>
<div class="td c" style="left:1240px;width:104px;letter-spacing:0.905px;text-indent:0.905px">2025-02-25</div>
<div class="td c" style="left:1344px;width:104px;letter-spacing:0.971px;text-indent:0.971px">2025-03-03</div>
<div class="td l" style="left:1552px;width:104px;letter-spacing:0.093px">Design Improv...</div>
<div class="td c" style="left:1656px;width:104px"><span class="cb "></span></div>
<div class="td l" style="left:1760px;width:136px;letter-spacing:-0.005px">Rev to change units associated</div>
</div>
<div class="tr alt" style="top:544px">
<div class="td c" style="left:0;width:38px"><span class="cb rowcb"></span></div>
<div class="td c" style="left:48px;width:88px"><span class="bdg rl" style="letter-spacing:0.085px;text-indent:0.085px">Released</span></div>
<div class="td c" style="left:136px;width:80px;letter-spacing:-0.165px;text-indent:-0.165px">1009R1</div>
<div class="td c" style="left:216px;width:60px"><span class="cb on "><svg viewBox="0 0 16 17" width="16" height="17"><path d="M2.2 9.4 5.4 13.300 12.400 6.300" fill="none" stroke="#a0afbd" stroke-width="1"/></svg></span></div>
<div class="td c" style="left:276px;width:60px"><span class="cb on "><svg viewBox="0 0 16 17" width="16" height="17"><path d="M2.2 9.4 5.4 13.300 12.400 6.300" fill="none" stroke="#a0afbd" stroke-width="1"/></svg></span></div>
<div class="td l" style="left:336px;width:120px;letter-spacing:0.329px">AM,DI,DM,ET,IM,...</div>
<div class="td l" style="left:456px;width:80px;letter-spacing:0.709px">N/A</div>
<div class="td l" style="left:536px;width:239px;letter-spacing:0.038px">Update electrical scope Remove NG Midas for</div>
<div class="td l" style="left:776px;width:104px;letter-spacing:0.052px">1266,1268,127...</div>
<div class="td l" style="left:880px;width:104px;letter-spacing:0.074px">Mechanical,El...</div>
<div class="td l" style="left:984px;width:128px;letter-spacing:-0.043px">sean johnson</div>
<div class="td c" style="left:1344px;width:104px;letter-spacing:0.700px;text-indent:0.700px">2025-02-19</div>
<div class="td l" style="left:1552px;width:104px;letter-spacing:0.093px">Design Improv...</div>
<div class="td c" style="left:1656px;width:104px"><span class="cb "></span></div>
<div class="td l" style="left:1760px;width:136px;letter-spacing:0.034px">Added removal of dedicated</div>
</div>
<div class="tr" style="top:572px">
<div class="td c" style="left:0;width:38px"><span class="cb rowcb"></span></div>
<div class="td c" style="left:48px;width:88px"><span class="bdg rl" style="letter-spacing:0.085px;text-indent:0.085px">Released</span></div>
<div class="td c" style="left:136px;width:80px;letter-spacing:0.505px;text-indent:0.505px">1009</div>
<div class="td c" style="left:216px;width:60px"><span class="cb on "><svg viewBox="0 0 16 17" width="16" height="17"><path d="M2.2 9.4 5.4 13.300 12.400 6.300" fill="none" stroke="#a0afbd" stroke-width="1"/></svg></span></div>
<div class="td c" style="left:276px;width:60px"><span class="cb on "><svg viewBox="0 0 16 17" width="16" height="17"><path d="M2.2 9.4 5.4 13.300 12.400 6.300" fill="none" stroke="#a0afbd" stroke-width="1"/></svg></span></div>
<div class="td l" style="left:336px;width:120px;letter-spacing:0.329px">AM,DI,DM,ET,IM,...</div>
<div class="td l" style="left:536px;width:239px;letter-spacing:0.032px">Remove NG Midas for Centrotherm Abatement</div>
<div class="td l" style="left:776px;width:104px;letter-spacing:0.052px">1266,1268,127...</div>
<div class="td l" style="left:880px;width:104px;letter-spacing:0.074px">Mechanical,El...</div>
<div class="td l" style="left:984px;width:128px;letter-spacing:-0.043px">sean johnson</div>
<div class="td c" style="left:1240px;width:104px;letter-spacing:0.734px;text-indent:0.734px">2025-01-06</div>
<div class="td c" style="left:1344px;width:104px;letter-spacing:0.734px;text-indent:0.734px">2025-01-09</div>
<div class="td l" style="left:1552px;width:104px;letter-spacing:0.093px">Design Improv...</div>
<div class="td c" style="left:1656px;width:104px"><span class="cb "></span></div>
<div class="td l" style="left:1760px;width:136px;letter-spacing:0.258px">2024.49.Facilities.8.FF 2</div>
</div>
<div class="tr alt" style="top:600px">
<div class="td c" style="left:0;width:38px"><span class="cb rowcb"></span></div>
<div class="td c" style="left:48px;width:88px"><span class="bdg rl" style="letter-spacing:0.085px;text-indent:0.085px">Released</span></div>
<div class="td c" style="left:136px;width:80px;letter-spacing:0.505px;text-indent:0.505px">1008</div>
<div class="td c" style="left:216px;width:60px"><span class="cb on "><svg viewBox="0 0 16 17" width="16" height="17"><path d="M2.2 9.4 5.4 13.300 12.400 6.300" fill="none" stroke="#a0afbd" stroke-width="1"/></svg></span></div>
<div class="td c" style="left:276px;width:60px"><span class="cb on "><svg viewBox="0 0 16 17" width="16" height="17"><path d="M2.2 9.4 5.4 13.300 12.400 6.300" fill="none" stroke="#a0afbd" stroke-width="1"/></svg></span></div>
<div class="td l" style="left:336px;width:120px;letter-spacing:0.329px">AM,DI,DM,ET,IM,...</div>
<div class="td l" style="left:536px;width:239px;letter-spacing:0.575px">160640-160643</div>
<div class="td l" style="left:776px;width:104px;letter-spacing:0.052px">1266,1268,127...</div>
<div class="td l" style="left:880px;width:104px;letter-spacing:0.134px">Electrical</div>
<div class="td l" style="left:984px;width:128px;letter-spacing:-0.011px">Aristotle Quintos</div>
<div class="td l" style="left:1112px;width:128px;letter-spacing:-0.011px">Aristotle Quintos</div>
<div class="td c" style="left:1240px;width:104px;letter-spacing:0.695px;text-indent:0.695px">2024-07-01</div>
<div class="td c" style="left:1344px;width:104px;letter-spacing:0.594px;text-indent:0.594px">2024-11-04</div>
<div class="td c" style="left:1448px;width:104px;letter-spacing:0.594px;text-indent:0.594px">2024-11-04</div>
<div class="td l" style="left:1552px;width:104px;letter-spacing:0.093px">Design Improv...</div>
<div class="td c" style="left:1656px;width:104px"><span class="cb "></span></div>
<div class="td l" style="left:1760px;width:136px;letter-spacing:0.057px">OSM receptacle assembly</div>
</div>
<div class="tr" style="top:628px">
<div class="td c" style="left:0;width:38px"><span class="cb rowcb"></span></div>
<div class="td c" style="left:48px;width:88px"><span class="bdg dr" style="letter-spacing:0.256px;text-indent:0.256px">Draft</span></div>
<div class="td c" style="left:136px;width:80px;letter-spacing:0.289px;text-indent:0.289px">1007</div>
<div class="td c" style="left:216px;width:60px"><span class="cb on "><svg viewBox="0 0 16 17" width="16" height="17"><path d="M2.2 9.4 5.4 13.300 12.400 6.300" fill="none" stroke="#a0afbd" stroke-width="1"/></svg></span></div>
<div class="td c" style="left:276px;width:60px"><span class="cb on "><svg viewBox="0 0 16 17" width="16" height="17"><path d="M2.2 9.4 5.4 13.300 12.400 6.300" fill="none" stroke="#a0afbd" stroke-width="1"/></svg></span></div>
<div class="td l" style="left:336px;width:120px;letter-spacing:0.329px">AM,DI,DM,ET,IM,...</div>
<div class="td l" style="left:536px;width:239px;letter-spacing:-0.021px">150517, change to pressure test duration.</div>
<div class="td l" style="left:776px;width:104px;letter-spacing:0.052px">1266,1268,127...</div>
<div class="td l" style="left:880px;width:104px;letter-spacing:0.188px">Mechanical</div>
<div class="td c" style="left:1240px;width:104px;letter-spacing:0.734px;text-indent:0.734px">2024-10-28</div>
<div class="td l" style="left:1552px;width:104px;letter-spacing:0.093px">Design Improv...</div>
<div class="td c" style="left:1656px;width:104px"><span class="cb "></span></div>
<div class="td l" style="left:1760px;width:136px;letter-spacing:0.048px">Reduce pressure test to 30</div>
</div>
</div>
<div class="modal" role="dialog" aria-label="Delete ECN">
<svg class="close" width="12" height="12" viewBox="0 0 12 12"><path d="M1.300 1.300 10.700 10.700M10.700 1.300 1.300 10.700" stroke="#1476c6" stroke-width="1.400" stroke-linecap="round" fill="none"/></svg>
<div class="mtitle">Delete ECN</div>
<div class="circ"><svg width="38" height="38" viewBox="0 0 24 24"><path fill="#fff" d="M6 19c0 1.100.9 2 2 2h8c1.100 0 2-.9 2-2V7H6v12zM19 4h-3.500l-1-1h-5l-1 1H5v2h14V4z"/></svg></div>
<div class="mmsg">Are you sure you want to delete this ECN?</div>
<div class="mbtn cancel">Cancel</div>
<div class="mbtn delete">Delete</div>
</div>
</body>
</html>
